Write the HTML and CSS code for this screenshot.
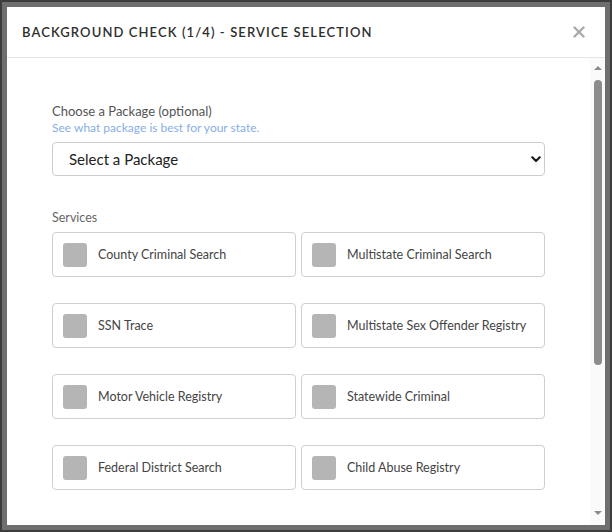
FILE: index.html
```html
<!DOCTYPE html>
<html lang="en">
<head>
    <meta charset="UTF-8">
    <meta name="viewport" content="width=device-width, initial-scale=1.0">
    <title>Background Check</title>
    <link rel="stylesheet" href="styles.css">
</head>
<body>
    <div class="backdrop">
        <div class="modal">
            <div class="modal-header">
                <h2 class="modal-title">Background Check (1/4) - Service Selection</h2>
                <button class="close" type="button" aria-label="Close">
                    <svg width="12" height="12" viewBox="0 0 12 12">
                        <path d="M1.5 1.5 L10.5 10.5 M10.5 1.5 L1.5 10.5" stroke="#a9a9a9" stroke-width="2.4" stroke-linecap="round"/>
                    </svg>
                </button>
            </div>

            <div class="modal-body">
                <div class="content">
                    <label class="field-label" for="package">Choose a Package (optional)</label>
                    <a class="hint" href="#">See what package is best for your state.</a>

                    <div class="select-wrap">
                        <select id="package" class="select">
                            <option>Select a Package</option>
                        </select>
                        <svg class="chevron" width="10" height="7" viewBox="0 0 10 7">
                            <path d="M1.3 1.3 L5 5 L8.7 1.3" fill="none" stroke="#1d1d1d" stroke-width="2.2" stroke-linecap="round" stroke-linejoin="round"/>
                        </svg>
                    </div>

                    <div class="field-label services-label">Services</div>
                    <div class="services">
                        <label class="service"><span class="check"></span>County Criminal Search</label>
                        <label class="service"><span class="check"></span>Multistate Criminal Search</label>
                        <label class="service"><span class="check"></span>SSN Trace</label>
                        <label class="service"><span class="check"></span>Multistate Sex Offender Registry</label>
                        <label class="service"><span class="check"></span>Motor Vehicle Registry</label>
                        <label class="service"><span class="check"></span>Statewide Criminal</label>
                        <label class="service"><span class="check"></span>Federal District Search</label>
                        <label class="service"><span class="check"></span>Child Abuse Registry</label>
                    </div>
                </div>

                <div class="scrollbar">
                    <span class="arrow up"></span>
                    <span class="thumb"></span>
                    <span class="arrow down"></span>
                </div>
            </div>
        </div>
    </div>
</body>
</html>
```

FILE: styles.css
```css
* {
    box-sizing: border-box;
}
body {
    margin: 0;
    font-family: Lato, "Open Sans", sans-serif;
    color: #333;
}
.backdrop {
    height: 532px;
    border: 2px solid #3c3c3c;
    background-color: #6e6e6e;
    padding: 5px;
}
.modal {
    background-color: #fff;
    height: 100%;
    display: flex;
    flex-direction: column;
}
.modal-header {
    height: 51px;
    flex: none;
    display: flex;
    align-items: center;
    justify-content: space-between;
    padding: 0 20px 0 15px;
    border-bottom: 1px solid #e6e6e6;
}
.modal-title {
    margin: 0;
    font-size: 13px;
    font-weight: 600;
    text-transform: uppercase;
    letter-spacing: 1.1px;
    color: #2e2e2e;
}
.close {
    border: none;
    background: none;
    padding: 0;
    display: flex;
    cursor: pointer;
}
.modal-body {
    flex: 1;
    display: flex;
    min-height: 0;
}
.content {
    flex: 1;
    padding: 45px 45px 0 45px;
    display: flex;
    flex-direction: column;
}
.field-label {
    font-size: 13px;
    line-height: 16px;
    color: #555;
}
.hint {
    font-size: 12px;
    line-height: 17px;
    color: #86aee8;
    text-decoration: none;
}
.select-wrap {
    position: relative;
    margin-top: 6px;
}
.select {
    appearance: none;
    -webkit-appearance: none;
    width: 100%;
    height: 34px;
    border: 1px solid #cdcdcd;
    border-radius: 4px;
    background-color: #fff;
    padding: 0 16px;
    font-family: inherit;
    font-size: 15px;
    color: #222;
}
.chevron {
    position: absolute;
    right: 4px;
    top: 14px;
}
.services-label {
    margin-top: 34px;
    font-size: 12.5px;
    color: #666;
}
.services {
    margin-top: 6px;
    display: grid;
    grid-template-columns: 1fr 1fr;
    column-gap: 5px;
    row-gap: 26px;
}
.service {
    height: 45px;
    border: 1px solid #cfcfcf;
    border-radius: 4px;
    display: flex;
    align-items: center;
    padding-left: 10px;
    font-size: 12.5px;
    color: #444;
    cursor: pointer;
}
.check {
    width: 24px;
    height: 24px;
    border-radius: 3px;
    background-color: #b5b5b5;
    margin-right: 11px;
    flex: none;
}
.scrollbar {
    width: 15px;
    flex: none;
    background-color: #fafafa;
    display: flex;
    flex-direction: column;
    align-items: center;
    padding: 8px 0 10px;
}
.arrow {
    width: 0;
    height: 0;
    border-left: 4px solid transparent;
    border-right: 4px solid transparent;
}
.arrow.up {
    border-bottom: 4px solid #8c8c8c;
}
.arrow.down {
    border-top: 4px solid #8c8c8c;
    margin-top: auto;
}
.thumb {
    width: 8px;
    height: 285px;
    margin-top: 10px;
    border-radius: 4px;
    background-color: #8c8c8c;
}
```
